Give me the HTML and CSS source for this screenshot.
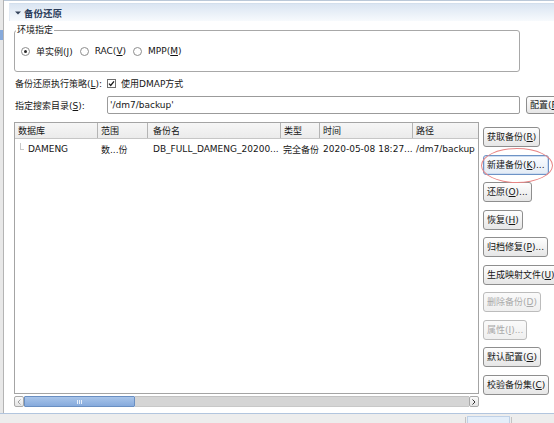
FILE: index.html
```html
<!DOCTYPE html>
<html>
<head>
<meta charset="utf-8">
<link rel="stylesheet" href="styles.css">
</head>
<body>
<div class="window">
  <div class="main">
    <div class="side"><div class="side-sel"></div></div>
    <div class="content">
      <div class="section-head">
        <svg class="twisty" width="6" height="4" viewBox="0 0 6 4"><path d="M0 0.5 L6 0.5 L3 3.5 Z" fill="#34425a"/></svg>
        <span class="section-title">备份还原</span>
      </div>
      <div class="section-body">
        <fieldset class="group">
          <legend>环境指定</legend>
          <div class="radios">
            <span class="opt"><span class="radio on"></span><span>单实例(<u>J</u>)</span></span>
            <span class="opt"><span class="radio"></span><span>RAC(<u>V</u>)</span></span>
            <span class="opt"><span class="radio"></span><span>MPP(<u>M</u>)</span></span>
          </div>
        </fieldset>
        <div class="check-row">
          <span class="check-label">备份还原执行策略(<u>L</u>):</span>
          <svg class="check" width="9" height="9" viewBox="0 0 9 9"><rect x="0.5" y="0.5" width="8" height="8" fill="#fff" stroke="#6f6f6f"/><path d="M2 4.6 L3.7 6.4 L7 2.3" fill="none" stroke="#1a1a1a" stroke-width="1.3"/></svg>
          <span>使用DMAP方式</span>
        </div>
        <div class="dir-row">
          <span class="dir-label">指定搜索目录(<u>S</u>):</span>
          <div class="input">'/dm7/backup'</div>
          <button class="btn cfg">配置(<u>F</u>)</button>
        </div>
        <div class="lower">
          <div class="table-wrap">
            <div class="table">
              <div class="thead">
                <div class="th c1">数据库</div>
                <div class="th c2">范围</div>
                <div class="th c3">备份名</div>
                <div class="th c4">类型</div>
                <div class="th c5">时间</div>
                <div class="th c6">路径</div>
              </div>
              <div class="trow">
                <div class="td c1"><span class="tree"></span>DAMENG</div>
                <div class="td c2">数...份</div>
                <div class="td c3">DB_FULL_DAMENG_20200...</div>
                <div class="td c4 tight">完全备份</div>
                <div class="td c5">2020-05-08 18:27...</div>
                <div class="td c6">/dm7/backup</div>
              </div>
            </div>
            <div class="hscroll">
              <div class="sb-btn"><svg width="4" height="6" viewBox="0 0 4 6"><path d="M3.5 0.5 L1 3 L3.5 5.5" fill="none" stroke="#a0a0a0"/></svg></div>
              <div class="sb-thumb"><span class="grip"></span><span class="grip"></span><span class="grip"></span></div>
              <div class="sb-track"></div>
              <div class="sb-btn"><svg width="4" height="6" viewBox="0 0 4 6"><path d="M0.5 0.5 L3 3 L0.5 5.5" fill="none" stroke="#333"/></svg></div>
            </div>
          </div>
          <div class="actions">
            <button class="btn">获取备份(<u>R</u>)</button>
            <div class="focus-wrap">
              <button class="btn focused">新建备份(<u>K</u>)...</button>
              <span class="annot"></span>
            </div>
            <button class="btn">还原(<u>O</u>)...</button>
            <button class="btn">恢复(<u>H</u>)</button>
            <button class="btn">归档修复(<u>P</u>)...</button>
            <button class="btn">生成映射文件(<u>U</u>)</button>
            <button class="btn disabled">删除备份(<u>D</u>)</button>
            <button class="btn disabled">属性(<u>I</u>)...</button>
            <button class="btn">默认配置(<u>G</u>)</button>
            <button class="btn">校验备份集(<u>C</u>)</button>
          </div>
        </div>
      </div>
    </div>
  </div>
  <div class="status">
    <span class="status-sep"></span>
    <span class="status-tab"></span>
    <span class="status-sep"></span>
  </div>
</div>
</body>
</html>
```

FILE: styles.css
```css
html, body {
  margin: 0;
  padding: 0;
}
body {
  width: 554px;
  height: 423px;
  overflow: hidden;
  background: #ffffff;
  font-family: "DejaVu Sans", "Noto Sans CJK SC", sans-serif;
  font-size: 9px;
  color: #151515;
}
u { text-decoration: underline; text-underline-offset: 1px; }

.window {
  display: flex;
  flex-direction: column;
  height: 423px;
}
.main {
  display: flex;
  height: 413px;
}
.side {
  width: 3px;
  flex: none;
  background: #e8e8e8;
  border-right: 1px solid #b4b4b4;
}
.side-sel {
  margin-top: 30px;
  height: 10px;
  background: #87aadb;
}
.content {
  flex: 1;
  min-width: 0;
  overflow: hidden;
  border-top: 1px solid #bac8d8;
  padding: 2px 0 0 5px;
}
.section-head {
  height: 17px;
  display: flex;
  align-items: center;
  gap: 3px;
  padding-left: 5px;
  border-top: 1px solid #d3dfec;
  border-left: 1px solid #e2eaf4;
  background: linear-gradient(#dae5f2, #f7fafd);
  color: #2b3c5a;
  font-weight: bold;
  font-size: 9.5px;
}
.section-body {
  padding-left: 5px;
}

.group {
  box-sizing: border-box;
  width: 506px;
  margin: 4px 0 0 0;
  padding: 9px 0 14px 1px;
  border: 1px solid #a8a8a8;
  border-radius: 3px;
}
.group legend {
  padding: 0 1px;
  margin: 0;
  line-height: 11px;
}
.radios {
  display: flex;
  align-items: center;
  height: 12px;
  margin-left: 5px;
}
.opt {
  display: flex;
  align-items: center;
  gap: 6px;
  margin-right: 7px;
}
.radio {
  width: 7px;
  height: 7px;
  border: 1px solid #8d8d8d;
  border-radius: 50%;
  background: #fff;
  display: flex;
  align-items: center;
  justify-content: center;
}
.radio.on::after {
  content: "";
  width: 3px;
  height: 3px;
  border-radius: 50%;
  background: #2a2a2a;
}

.check-row {
  display: flex;
  align-items: center;
  height: 12px;
  margin-top: 5px;
  padding-left: 1px;
}
.check-label { margin-right: 5px; }
.check { margin-right: 5px; flex: none; }

.dir-row {
  display: flex;
  align-items: center;
  height: 18px;
  margin-top: 7px;
}
.dir-label {
  width: 93px;
  flex: none;
  padding-left: 1px;
  box-sizing: border-box;
}
.input {
  box-sizing: border-box;
  width: 413px;
  height: 18px;
  flex: none;
  border: 1px solid #9b9b9b;
  border-radius: 2px;
  padding-left: 2px;
  line-height: 16px;
  background: #fff;
}
.btn {
  box-sizing: border-box;
  height: 20px;
  flex: none;
  border: 1px solid #8e8e8e;
  border-radius: 3px;
  background: linear-gradient(#fefefe, #e6e6e6);
  padding: 0 3px;
  margin: 0;
  font: inherit;
  color: #151515;
  line-height: 18px;
  white-space: nowrap;
  text-align: left;
}
.btn.cfg {
  height: 18px;
  line-height: 16px;
  margin-left: 6px;
}
.btn.focused {
  border-color: #6d93c6;
  box-shadow: inset 0 0 0 1px #cddcf0;
  background: linear-gradient(#fbfdff, #e3ebf5);
}
.btn.disabled {
  color: #a9a9a9;
  border-color: #bcbcbc;
  background: linear-gradient(#fafafa, #efefef);
}

.lower {
  display: flex;
  margin-top: 8px;
}
.table-wrap {
  width: 465px;
  flex: none;
}
.table {
  box-sizing: border-box;
  height: 272px;
  border: 1px solid #a4a4a4;
  background: #fff;
}
.thead {
  display: flex;
  height: 15px;
  background: linear-gradient(#f6f6f6, #ebebeb);
  border-bottom: 1px solid #c6c6c6;
}
.trow {
  display: flex;
  height: 16px;
  margin-top: 2px;
}
.th, .td {
  box-sizing: border-box;
  flex: none;
  white-space: nowrap;
  overflow: hidden;
  display: flex;
  align-items: center;
  padding-left: 3px;
}
.th {
  border-right: 1px solid #b4b4b4;
}
.th.c6 { border-right: 0; }
.c1 { width: 83px; }
.c2 { width: 50px; }
.c3 { width: 133px; }
.c4 { width: 39px; }
.c5 { width: 93px; }
.c6 { width: 65px; }
.th.c3 { padding-left: 5px; }
.td.c3 { padding-left: 5px; }
.td.tight { padding-left: 2px; }
.td.c1 { padding-left: 5px; }
.tree {
  width: 3px;
  height: 6px;
  margin: -5px 4px 0 0;
  border-left: 1px solid #c8c8c8;
  border-bottom: 1px solid #c8c8c8;
}

.hscroll {
  display: flex;
  height: 11px;
  margin-top: 2px;
}
.sb-btn {
  box-sizing: border-box;
  width: 10px;
  height: 11px;
  flex: none;
  border: 1px solid #a9a9a9;
  border-radius: 2px;
  background: linear-gradient(#fafafa, #e4e4e4);
  display: flex;
  align-items: center;
  justify-content: center;
}
.sb-thumb {
  box-sizing: border-box;
  width: 111px;
  flex: none;
  height: 11px;
  border: 1px solid #6a8fc2;
  border-radius: 1px;
  background: linear-gradient(#a9c5ea, #86aadc);
  display: flex;
  align-items: center;
  justify-content: center;
  gap: 1px;
}
.grip {
  width: 1px;
  height: 4px;
  background: #e8f0fb;
}
.sb-track {
  flex: 1;
  height: 11px;
  box-sizing: border-box;
  background: #d5d5d5;
  border-top: 1px solid #c2c2c2;
  border-bottom: 1px solid #c8c8c8;
}

.actions {
  display: flex;
  flex-direction: column;
  align-items: flex-start;
  gap: 7.5px;
  padding-top: 5px;
  margin-left: 4px;
}
.focus-wrap {
  position: relative;
  display: flex;
}
.annot {
  position: absolute;
  left: -2px;
  top: -7px;
  width: 72px;
  height: 35px;
  box-sizing: border-box;
  border: 1px solid #e88585;
  border-radius: 50%;
  pointer-events: none;
}

.status {
  height: 10px;
  box-sizing: border-box;
  display: flex;
  align-items: flex-end;
  padding-left: 465px;
  border-top: 1px solid #b2c5de;
  background: #ededed;
}
.status-sep {
  width: 1px;
  height: 6px;
  background: #c3c3c3;
}
.status-tab {
  box-sizing: border-box;
  width: 43px;
  height: 7px;
  margin: 0 1px;
  background: #e4eef9;
  border: 1px solid #bfd1e7;
  border-bottom: 0;
}
```
